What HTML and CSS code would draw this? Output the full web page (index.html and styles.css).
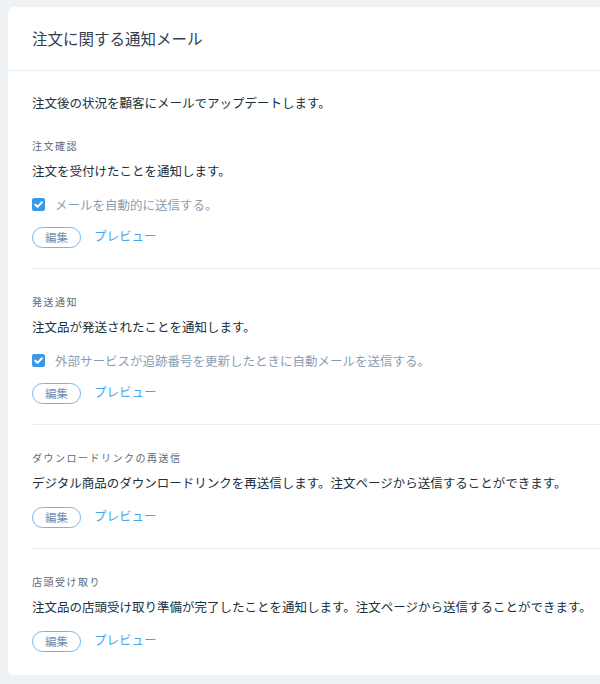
FILE: index.html
```html
<!DOCTYPE html>
<html lang="ja">
<head>
<meta charset="utf-8">
<link rel="stylesheet" href="styles.css">
</head>
<body>
<div class="card">
  <div class="card-header">
    <h1 class="title">注文に関する通知メール</h1>
  </div>
  <div class="card-body">
    <p class="intro">注文後の状況を顧客にメールでアップデートします。</p>

    <section class="section">
      <div class="label">注文確認</div>
      <p class="desc">注文を受付けたことを通知します。</p>
      <label class="check-row">
        <span class="checkbox"><svg viewBox="0 0 13 13" width="13" height="13"><path d="M3.2 6.6 L5.5 8.9 L9.9 4.2" fill="none" stroke="#fff" stroke-width="2" stroke-linecap="round" stroke-linejoin="round"/></svg></span>
        <span class="check-text">メールを自動的に送信する。</span>
      </label>
      <div class="actions">
        <span class="btn">編集</span>
        <span class="link">プレビュー</span>
      </div>
    </section>

    <section class="section">
      <div class="label">発送通知</div>
      <p class="desc">注文品が発送されたことを通知します。</p>
      <label class="check-row">
        <span class="checkbox"><svg viewBox="0 0 13 13" width="13" height="13"><path d="M3.2 6.6 L5.5 8.9 L9.9 4.2" fill="none" stroke="#fff" stroke-width="2" stroke-linecap="round" stroke-linejoin="round"/></svg></span>
        <span class="check-text">外部サービスが追跡番号を更新したときに自動メールを送信する。</span>
      </label>
      <div class="actions">
        <span class="btn">編集</span>
        <span class="link">プレビュー</span>
      </div>
    </section>

    <section class="section">
      <div class="label">ダウンロードリンクの再送信</div>
      <p class="desc">デジタル商品のダウンロードリンクを再送信します。注文ページから送信することができます。</p>
      <div class="actions">
        <span class="btn">編集</span>
        <span class="link">プレビュー</span>
      </div>
    </section>

    <section class="section last">
      <div class="label">店頭受け取り</div>
      <p class="desc">注文品の店頭受け取り準備が完了したことを通知します。注文ページから送信することができます。</p>
      <div class="actions">
        <span class="btn">編集</span>
        <span class="link">プレビュー</span>
      </div>
    </section>
  </div>
</div>
</body>
</html>
```

FILE: styles.css
```css
html, body {
  margin: 0;
  padding: 0;
  overflow: hidden;
}
body {
  background: #eef2f5;
  font-family: "Noto Sans CJK JP", "Noto Sans", sans-serif;
  color: #20303c;
  padding: 7px 0 0 8px;
  height: 684px;
  box-sizing: border-box;
}
.card {
  width: 592px;
  background: #fff;
  border-radius: 6px 0 0 6px;
}
.card-header {
  padding: 20px 0 21px 24px;
  border-bottom: 1px solid #e6ecef;
}
.title {
  margin: 0;
  font-size: 15.5px;
  line-height: 22px;
  font-weight: 400;
  color: #32404f;
}
.card-body {
  padding: 23px 0 0 24px;
}
.intro {
  margin: 0 0 26px;
  font-size: 12.5px;
  line-height: 18px;
}
.section {
  padding: 0 0 20px;
}
.section + .section {
  border-top: 1px solid #eaeef1;
  padding-top: 25px;
}
.section.last {
  padding-bottom: 23px;
}
.label {
  font-size: 10px;
  line-height: 16px;
  letter-spacing: 1.5px;
  color: #5b6a7a;
}
.desc {
  margin: 8px 0 0;
  font-size: 12.5px;
  line-height: 18px;
}
.check-row {
  margin-top: 15px;
  display: flex;
  align-items: center;
  height: 18px;
}
.checkbox {
  width: 13px;
  height: 13px;
  border-radius: 2px;
  background: #3899ec;
  display: flex;
}
.check-text {
  margin-left: 10px;
  font-size: 12.5px;
  color: #8c9db0;
}
.actions {
  margin-top: 13px;
  display: flex;
  align-items: center;
  height: 22px;
}
.desc + .actions {
  margin-top: 14px;
}
.btn {
  box-sizing: border-box;
  width: 49px;
  height: 21px;
  border: 1px solid #6fb6f2;
  border-radius: 11px;
  display: flex;
  align-items: center;
  justify-content: center;
  font-size: 11.5px;
  color: #6f8fb2;
}
.link {
  margin-left: 13px;
  font-size: 12.5px;
  color: #4aa3ee;
  line-height: 18px;
  padding-bottom: 2px;
}
```
